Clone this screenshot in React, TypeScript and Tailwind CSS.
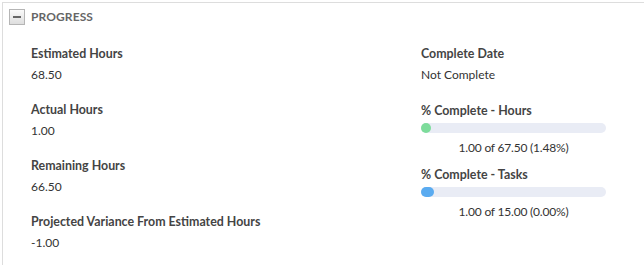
import React from "react";

const font = { fontFamily: "Lato, 'Noto Sans', sans-serif" };

function Field({ label, value }: { label: string; value: string }) {
  return (
    <div className="flex flex-col">
      <div className="text-[12.4px] leading-[16px] font-bold text-[#444]">{label}</div>
      <div className="mt-[5px] text-[12px] leading-[16px] text-[#333]">{value}</div>
    </div>
  );
}

function Bar({
  label,
  text,
  dotClass,
}: {
  label: string;
  text: string;
  dotClass: string;
}) {
  return (
    <div className="flex flex-col w-[185px]">
      <div className="text-[12.4px] leading-[16px] font-bold text-[#444]">{label}</div>
      <div className="mt-[4px] h-[10px] rounded-full bg-[#e9ecf5] flex">
        <div className={dotClass} />
      </div>
      <div className="mt-[7px] text-[12px] leading-[16px] text-[#333] text-center tracking-[-0.2px]">{text}</div>
    </div>
  );
}

export default function App() {
  return (
    <div className="w-[644px] h-[265px] bg-white pt-[2px] pl-[2px] overflow-hidden" style={font}>
      <div className="border-t border-l border-[#dddddd] h-[263px]">
        <div className="flex items-center pl-[6px] pt-[6px] gap-[6px]">
          <div className="w-[16px] h-[16px] border border-[#b5b5b5] bg-gradient-to-b from-[#fafafa] to-[#dedede] flex items-center justify-center">
            <div className="w-[8px] h-[2px] bg-[#666]" />
          </div>
          <div className="text-[12px] leading-[16px] font-bold text-[#666] tracking-[0.1px]">PROGRESS</div>
        </div>
        <div className="mt-[21px] pl-[28px] flex">
          <div className="w-[390px] flex flex-col gap-[19px]">
            <Field label="Estimated Hours" value="68.50" />
            <Field label="Actual Hours" value="1.00" />
            <Field label="Remaining Hours" value="66.50" />
            <Field label="Projected Variance From Estimated Hours" value="-1.00" />
          </div>
          <div className="flex flex-col">
            <Field label="Complete Date" value="Not Complete" />
            <div className="mt-[20px]">
              <Bar
                label="% Complete - Hours"
                text="1.00 of 67.50 (1.48%)"
                dotClass="w-[10px] h-[10px] rounded-full bg-[#7ddc9b]"
              />
            </div>
            <div className="mt-[11px]">
              <Bar
                label="% Complete - Tasks"
                text="1.00 of 15.00 (0.00%)"
                dotClass="w-[13px] h-[10px] rounded-full bg-[#5aabf0]"
              />
            </div>
          </div>
        </div>
      </div>
    </div>
  );
}
